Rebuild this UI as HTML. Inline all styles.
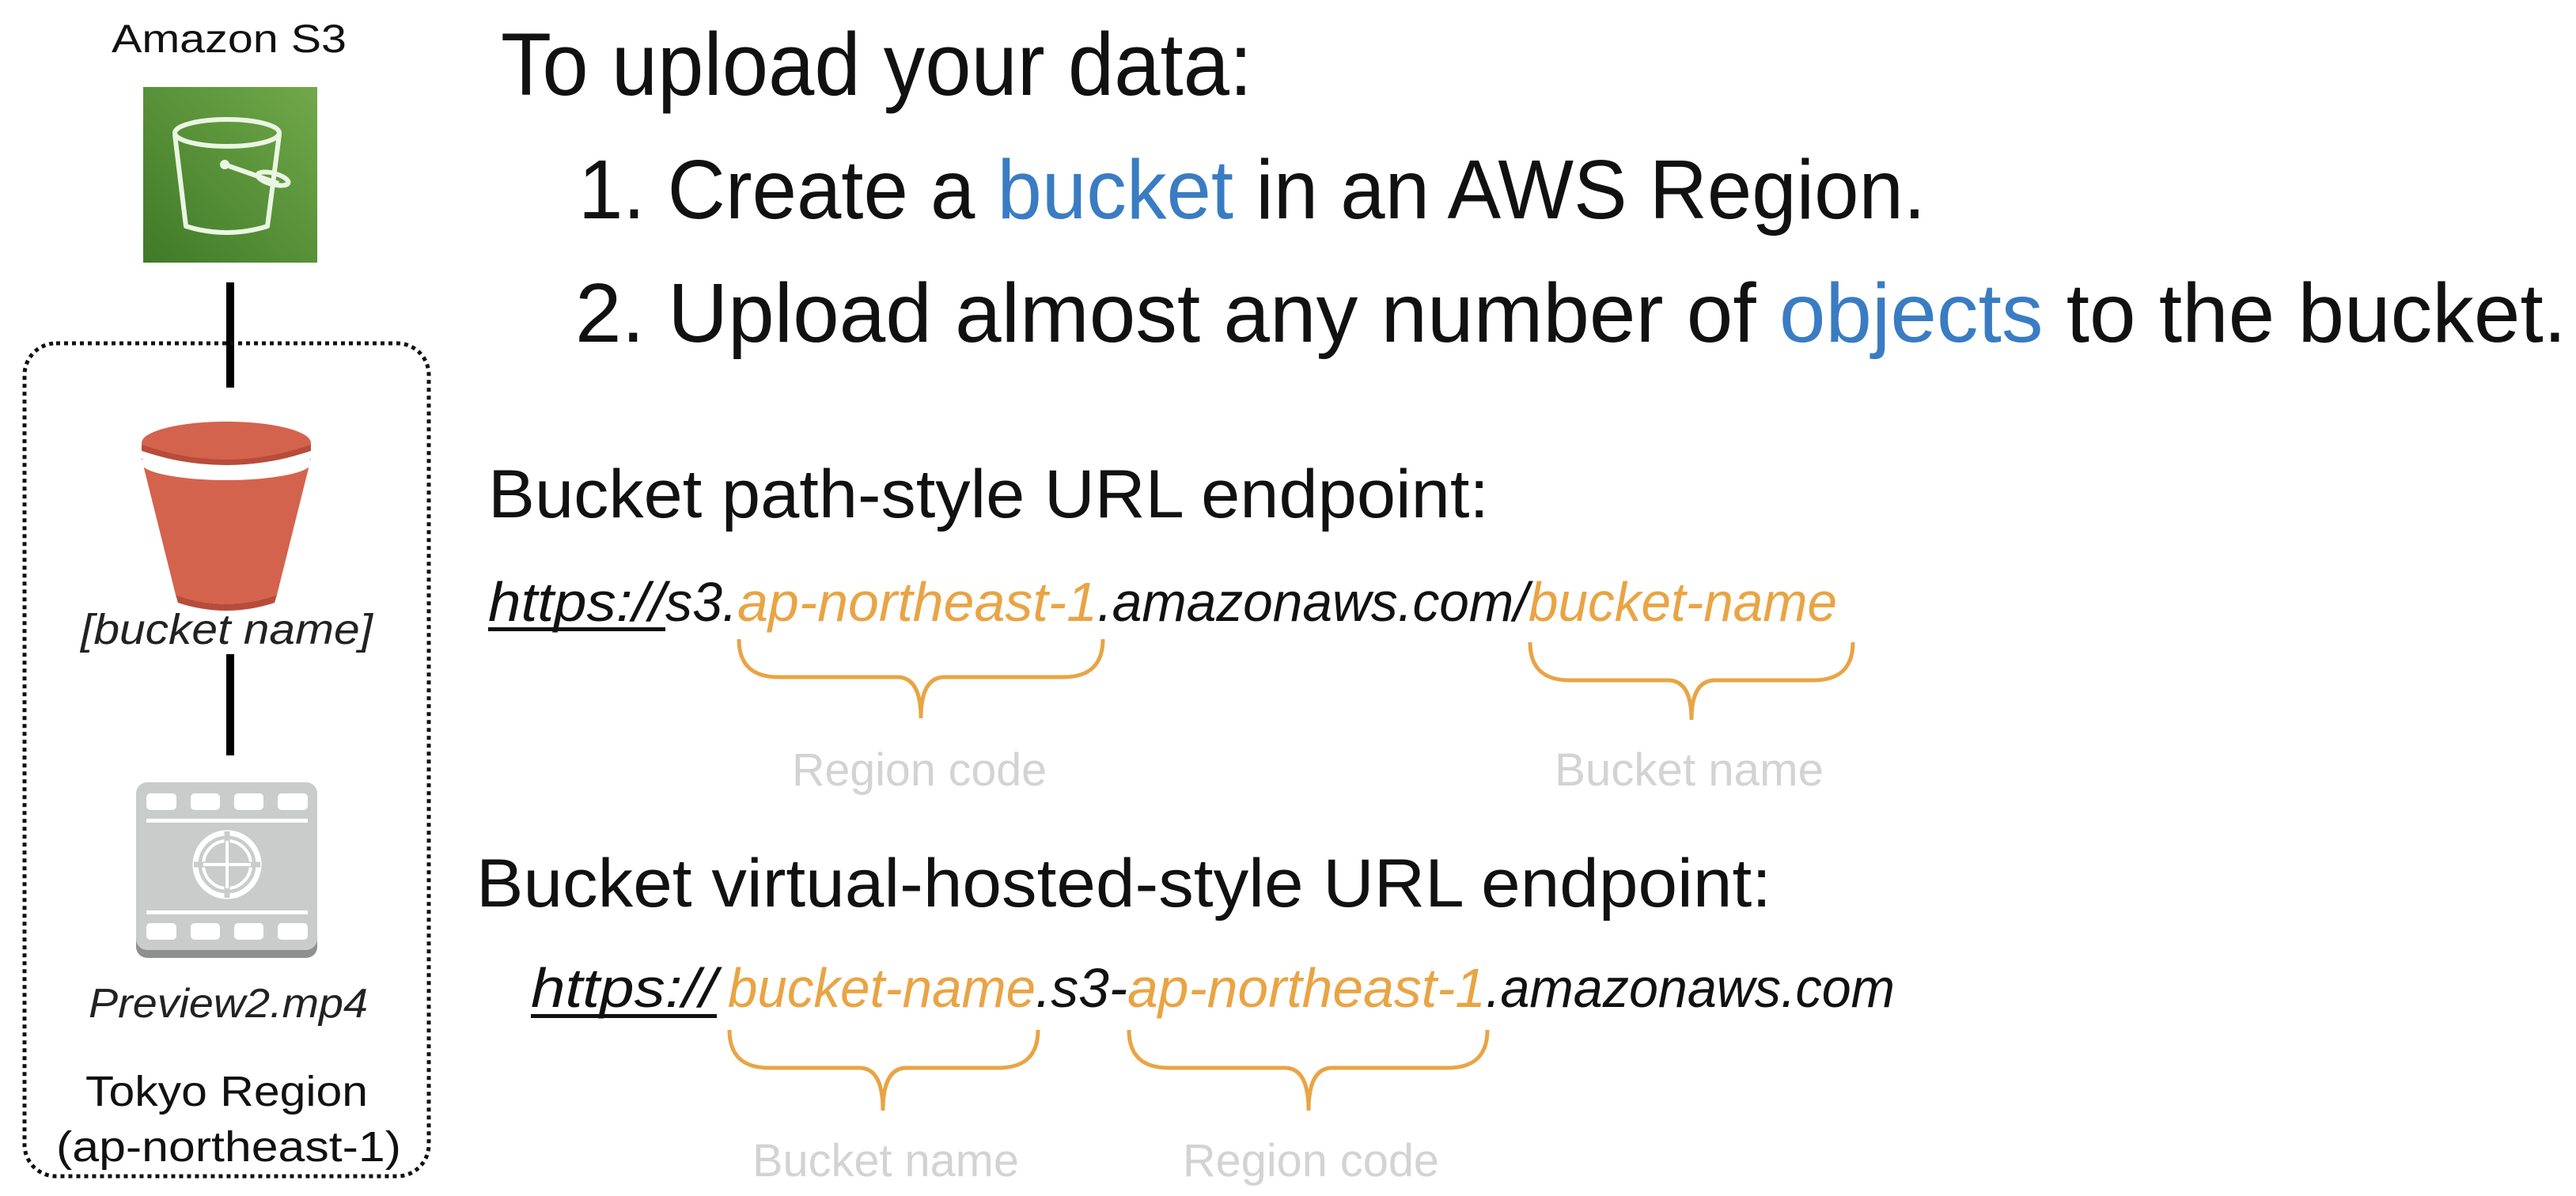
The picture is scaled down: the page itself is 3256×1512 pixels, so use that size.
<!DOCTYPE html>
<html><head><meta charset="utf-8"><style>
html,body{margin:0;padding:0;background:#fff;}
svg{display:block}
text{font-family:"Liberation Sans",sans-serif;}
</style></head><body>
<svg width="3256" height="1512" viewBox="0 0 3256 1512" xmlns="http://www.w3.org/2000/svg">
<defs>
<linearGradient id="g" x1="0" y1="1" x2="1" y2="0">
<stop offset="0" stop-color="#3f7a27"/><stop offset="1" stop-color="#71a84a"/>
</linearGradient>
</defs>
<rect width="3256" height="1512" fill="#fff"/>

<!-- left column -->
<text x="141" y="66" font-size="50" fill="#111" textLength="297" lengthAdjust="spacingAndGlyphs">Amazon S3</text>
<rect x="181" y="110" width="220" height="222" fill="url(#g)"/>
<g fill="none" stroke="#eaf6e2" stroke-width="6" stroke-linejoin="round">
<ellipse cx="287" cy="168" rx="66" ry="17"/>
<path d="M221 170 L235 286 Q286 302 338 286 L353 170"/>
<path d="M284 208 L352 232"/>
<ellipse cx="345" cy="226" rx="20" ry="7" transform="rotate(15 345 226)"/>
</g>
<circle cx="284" cy="208" r="6" fill="#eaf6e2"/>

<rect x="286" y="357" width="10" height="133" fill="#000"/>
<rect x="31" y="434" width="511" height="1053" rx="40" fill="none" stroke="#111" stroke-width="5" stroke-dasharray="5 5"/>
<rect x="286" y="827" width="10" height="128" fill="#000"/>

<!-- red bucket -->
<path d="M179 580 L222 752 Q286 775 350 752 L393 580 Z" fill="#d4634e"/>
<path d="M222 752 Q286 775 350 752 L347 762 Q286 782 225 762 Z" fill="#b84c3a"/>
<ellipse cx="286" cy="585" rx="108" ry="22" fill="#fff"/>
<ellipse cx="286" cy="560" rx="107" ry="27" fill="#d4634e"/>
<path d="M179 562 Q286 600 393 562 L393 570 Q286 606 179 570 Z" fill="#b84c3a"/>

<text x="102" y="814" font-size="54" font-style="italic" fill="#222" textLength="369" lengthAdjust="spacingAndGlyphs">[bucket name]</text>

<!-- film icon -->
<rect x="172" y="995" width="229" height="216" rx="14" fill="#8e8f8f"/>
<rect x="172" y="989" width="229" height="212" rx="14" fill="#cacbcb"/>
<g fill="#fff">
<rect x="185" y="1003" width="38" height="21" rx="5"/>
<rect x="241" y="1003" width="37" height="21" rx="5"/>
<rect x="296" y="1003" width="37" height="21" rx="5"/>
<rect x="351" y="1003" width="38" height="21" rx="5"/>
<rect x="185" y="1167" width="38" height="21" rx="5"/>
<rect x="241" y="1167" width="37" height="21" rx="5"/>
<rect x="296" y="1167" width="37" height="21" rx="5"/>
<rect x="351" y="1167" width="38" height="21" rx="5"/>
<rect x="185" y="1035" width="204" height="5"/>
<rect x="185" y="1151" width="204" height="5"/>
</g>
<circle cx="287" cy="1093" r="40" fill="none" stroke="#fff" stroke-width="7"/>
<circle cx="287" cy="1093" r="30" fill="none" stroke="#fff" stroke-width="4"/>
<path d="M287 1051 V1135 M245 1093 H329" stroke="#cacbcb" stroke-width="7"/>
<path d="M287 1063 V1123 M257 1093 H317" stroke="#fff" stroke-width="4"/>

<text x="112" y="1286" font-size="52" font-style="italic" fill="#222" textLength="353" lengthAdjust="spacingAndGlyphs">Preview2.mp4</text>
<text x="108" y="1398" font-size="54" fill="#111" textLength="357" lengthAdjust="spacingAndGlyphs">Tokyo Region</text>
<text x="71" y="1468" font-size="54" fill="#111" textLength="436" lengthAdjust="spacingAndGlyphs">(ap-northeast-1)</text>

<!-- headings -->
<text x="633" y="120" font-size="112" fill="#111" textLength="950" lengthAdjust="spacingAndGlyphs">To upload your data:</text>
<text x="731" y="276" font-size="106" fill="#111" textLength="1703" lengthAdjust="spacingAndGlyphs">1.  Create a <tspan fill="#3a7cc3">bucket</tspan> in an AWS Region.</text>
<text x="727" y="432" font-size="106" fill="#111" textLength="2517" lengthAdjust="spacingAndGlyphs">2.  Upload almost any number of <tspan fill="#3a7cc3">objects</tspan> to the bucket.</text>

<text x="617" y="654" font-size="86" fill="#111" textLength="1265" lengthAdjust="spacingAndGlyphs">Bucket path-style URL endpoint:</text>

<g font-size="70" font-style="italic">
<text x="617" y="785" fill="#111" textLength="224" lengthAdjust="spacingAndGlyphs">https://</text>
<text x="841" y="785" fill="#111" textLength="91" lengthAdjust="spacingAndGlyphs">s3.</text>
<text x="932" y="785" fill="#e9a444" textLength="455" lengthAdjust="spacingAndGlyphs">ap-northeast-1</text>
<text x="1387" y="785" fill="#111" textLength="545" lengthAdjust="spacingAndGlyphs">.amazonaws.com/</text>
<text x="1932" y="785" fill="#e9a444" textLength="390" lengthAdjust="spacingAndGlyphs">bucket-name</text>
</g>
<rect x="617" y="793" width="224" height="5" fill="#111"/>

<g fill="none" stroke="#e9a444" stroke-width="5">
<path d="M934 808 Q934 856 984 856 L1134 856 Q1164 856 1164 908 Q1164 856 1194 856 L1344 856 Q1394 856 1394 808"/>
<path d="M1934 812 Q1934 860 1984 860 L2108 860 Q2138 860 2138 910 Q2138 860 2168 860 L2292 860 Q2342 860 2342 812"/>
<path d="M922 1302 Q922 1350 972 1350 L1086 1350 Q1116 1350 1116 1404 Q1116 1350 1146 1350 L1262 1350 Q1312 1350 1312 1302"/>
<path d="M1427 1302 Q1427 1350 1477 1350 L1624 1350 Q1654 1350 1654 1404 Q1654 1350 1684 1350 L1830 1350 Q1880 1350 1880 1302"/>
</g>

<g font-size="58" fill="#d3d3d3">
<text x="1001" y="993" textLength="322" lengthAdjust="spacingAndGlyphs">Region code</text>
<text x="1965" y="993" textLength="340" lengthAdjust="spacingAndGlyphs">Bucket name</text>
<text x="951" y="1487" textLength="337" lengthAdjust="spacingAndGlyphs">Bucket name</text>
<text x="1495" y="1487" textLength="324" lengthAdjust="spacingAndGlyphs">Region code</text>
</g>

<text x="602" y="1146" font-size="86" fill="#111" textLength="1637" lengthAdjust="spacingAndGlyphs">Bucket virtual-hosted-style URL endpoint:</text>

<g font-size="70" font-style="italic">
<text x="671" y="1273" fill="#111" textLength="235" lengthAdjust="spacingAndGlyphs">https://</text>
<text x="920" y="1273" fill="#e9a444" textLength="389" lengthAdjust="spacingAndGlyphs">bucket-name</text>
<text x="1309" y="1273" fill="#111" textLength="116" lengthAdjust="spacingAndGlyphs">.s3-</text>
<text x="1425" y="1273" fill="#e9a444" textLength="453" lengthAdjust="spacingAndGlyphs">ap-northeast-1</text>
<text x="1878" y="1273" fill="#111" textLength="517" lengthAdjust="spacingAndGlyphs">.amazonaws.com</text>
</g>
<rect x="671" y="1282" width="235" height="5" fill="#111"/>
</svg>
</body></html>
